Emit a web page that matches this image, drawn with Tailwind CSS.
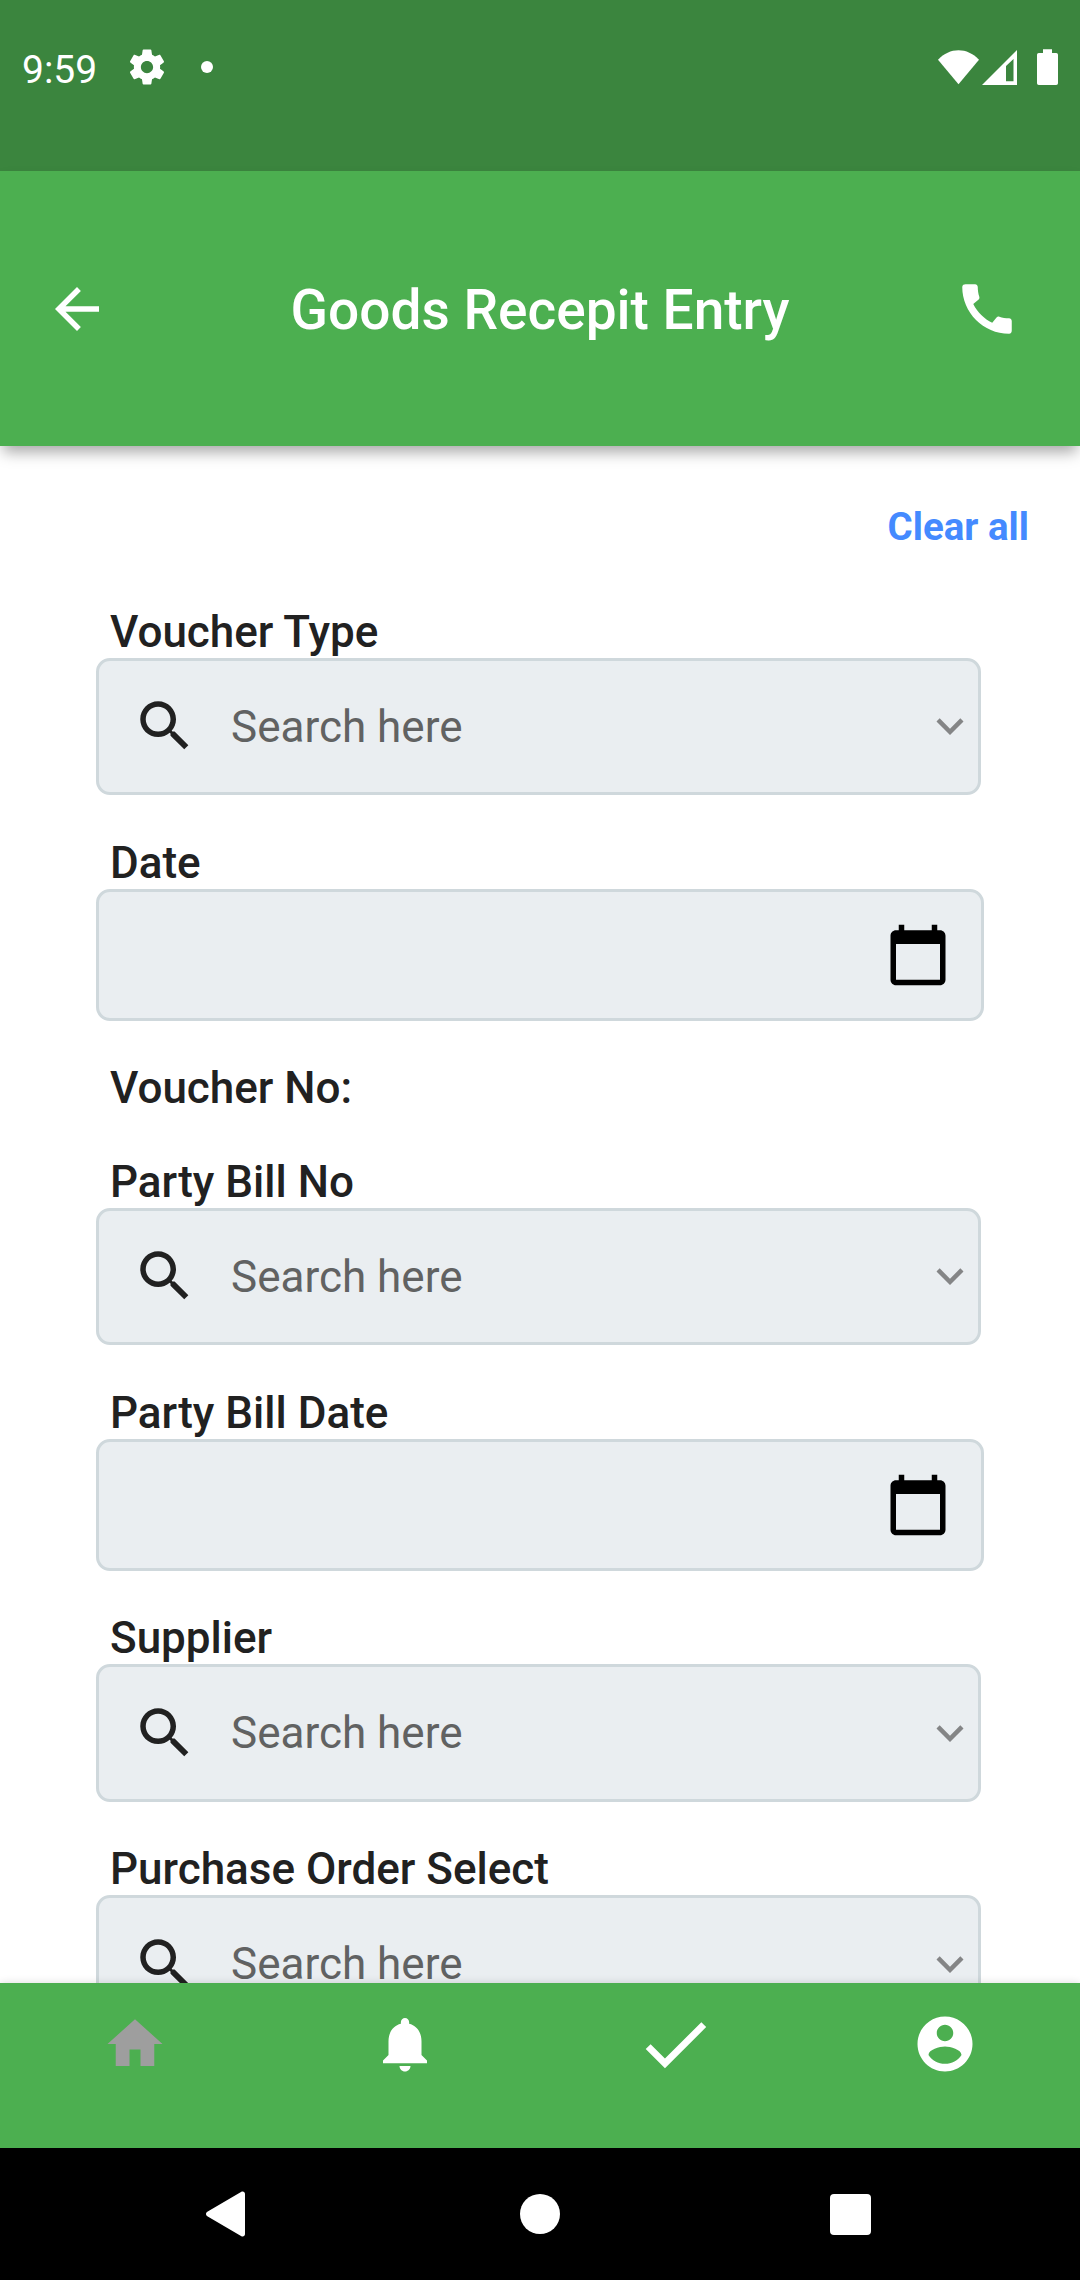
<!DOCTYPE html>
<html lang="en">
<head>
<meta charset="utf-8">
<title>Goods Recepit Entry</title>
<script src="https://cdn.jsdelivr.net/npm/@tailwindcss/browser@4"></script>
</head>
<body class="bg-white">
<svg class="hidden">
  <symbol id="search" viewBox="0 0 24 24"><path d="M15.5 14h-.79l-.28-.27C15.41 12.59 16 11.11 16 9.5 16 5.91 13.09 3 9.5 3S3 5.91 3 9.5 5.91 16 9.5 16c1.61 0 3.09-.59 4.23-1.57l.27.28v.79l5 4.99L20.49 19l-4.99-5zm-6 0C7.01 14 5 11.99 5 9.5S7.01 5 9.5 5 14 7.01 14 9.5 11.99 14 9.5 14z"/></symbol>
  <symbol id="chevron" viewBox="0 0 24 24"><path d="M7.41 8.59 12 13.17l4.59-4.58L18 10l-6 6-6-6z"/></symbol>
  <symbol id="calendar" viewBox="0 0 24 24"><path d="M20 3h-1V1h-2v2H7V1H5v2H4c-1.1 0-2 .9-2 2v16c0 1.1.9 2 2 2h16c1.1 0 2-.9 2-2V5c0-1.1-.9-2-2-2zm0 18H4V8h16v13z"/></symbol>
</svg>
<div class="flex h-[2280px] w-[1080px] flex-col overflow-hidden bg-white font-[Roboto,sans-serif] text-[#212121]">

  <!-- Status bar -->
  <div class="flex h-[171px] shrink-0 items-start justify-between bg-[#3b853e] text-white">
    <div class="flex h-[134px] items-center pl-[22px]">
      <span class="w-[103px] pt-[7px] text-[39px] leading-none">9:59</span>
      <svg class="ml-px size-[42px]" viewBox="0 0 24 24" fill="currentColor"><path d="M19.43 12.98c.04-.32.07-.64.07-.98s-.03-.66-.07-.98l2.11-1.65c.19-.15.24-.42.12-.64l-2-3.46c-.12-.22-.39-.3-.61-.22l-2.49 1c-.52-.4-1.08-.73-1.69-.98l-.38-2.65C14.46 2.18 14.25 2 14 2h-4c-.25 0-.46.18-.49.42l-.38 2.65c-.61.25-1.17.59-1.69.98l-2.49-1c-.23-.09-.49 0-.61.22l-2 3.46c-.13.22-.07.49.12.64l2.11 1.65c-.04.32-.07.65-.07.98s.03.66.07.98l-2.11 1.65c-.19.15-.24.42-.12.64l2 3.46c.12.22.39.3.61.22l2.49-1c.52.4 1.08.73 1.69.98l.38 2.65c.03.24.24.42.49.42h4c.25 0 .46-.18.49-.42l.38-2.65c.61-.25 1.17-.59 1.69-.98l2.49 1c.23.09.49 0 .61-.22l2-3.46c.12-.22.07-.49-.12-.64l-2.11-1.65zM12 15.5c-1.93 0-3.5-1.57-3.5-3.5s1.57-3.5 3.5-3.5 3.5 1.57 3.5 3.5-1.57 3.5-3.5 3.5z"/></svg>
      <span class="ml-[33px] size-3 rounded-full bg-white"></span>
    </div>
    <svg class="mt-[49px] mr-[22px] h-9 w-[120px]" viewBox="0 0 120 36" fill="currentColor">
      <path d="M0 10.7C6 4.5 13 1.3 20.5 1.3S35 4.5 41 10.7L20.5 35.3z"/>
      <path fill-rule="evenodd" d="M44 36 79 1v35zM68 17v15.300h7.500V10z"/>
      <path d="M105 .3h9V4h4.200a1.800 1.800 0 0 1 1.800 1.800v28.400a1.800 1.800 0 0 1-1.800 1.800h-17.400a1.800 1.800 0 0 1-1.800-1.800V5.800A1.800 1.800 0 0 1 100.800 4h4.200z"/>
    </svg>
  </div>

  <!-- App bar -->
  <header class="z-10 flex h-[275px] shrink-0 items-center justify-between bg-[#4caf50] pr-[60px] pl-11 text-white shadow-[0_9px_14px_-3px_rgba(0,0,0,0.35)]">
    <svg class="size-[66px]" viewBox="0 0 24 24" fill="currentColor"><path d="M20 11H7.830l5.590-5.590L12 4l-8 8 8 8 1.410-1.410L7.830 13H20v-2z"/></svg>
    <h1 class="pt-[3px] pl-4 text-[55px] leading-none font-medium">Goods Recepit Entry</h1>
    <svg class="size-[66px]" viewBox="0 0 24 24" fill="currentColor"><path d="M20.010 15.380c-1.230 0-2.420-.2-3.530-.56-.35-.12-.74-.03-1.010.24l-1.570 1.970c-2.830-1.350-5.480-3.900-6.890-6.830l1.950-1.660c.27-.28.35-.67.24-1.020-.37-1.110-.56-2.300-.56-3.530 0-.54-.45-.99-.99-.99H4.190C3.650 3 3 3.240 3 3.990 3 13.280 10.730 21 20.010 21c.71 0 .99-.63.99-1.180v-3.450c0-.54-.45-.99-.99-.99z"/></svg>
  </header>

  <!-- Form -->
  <main class="min-h-0 flex-1 overflow-hidden">
    <div class="flex h-[159.45px] justify-end pt-[58px] pr-[51px]">
      <span class="h-[46px] text-[38.5px] leading-[46px] font-bold text-[#448aff]">Clear all</span>
    </div>
    <div class="flex flex-col gap-[41.25px] pl-24">
      <section>
        <h2 class="h-[52.25px] pl-3.5 text-[44px] leading-[54px] font-medium">Voucher Type</h2>
        <div class="flex h-[137.500px] w-[885px] items-center rounded-[14px] border-3 border-[#cfd8dc] bg-[#eaeef1] pr-px pl-[33px]">
          <svg class="size-[66px]" fill="currentColor"><use href="#search"/></svg>
          <span class="flex-1 pt-px pl-[33px] text-[44px] leading-[52px] text-[#616262]">Search here</span>
          <svg class="size-[54px] text-[#848586]" fill="currentColor"><use href="#chevron"/></svg>
        </div>
      </section>
      <section>
        <h2 class="h-[52.25px] pl-3.5 text-[44px] leading-[54px] font-medium">Date</h2>
        <div class="flex h-[132px] w-[888px] items-center justify-end rounded-[14px] border-3 border-[#cfd8dc] bg-[#eaeef1] pr-[30px]">
          <svg class="size-[66px] text-black" fill="currentColor"><use href="#calendar"/></svg>
        </div>
      </section>
      <h2 class="h-[52.25px] pl-3.5 text-[44px] leading-[52px] font-medium">Voucher No:</h2>
      <section>
        <h2 class="h-[52.25px] pl-3.5 text-[44px] leading-[54px] font-medium">Party Bill No</h2>
        <div class="flex h-[137.500px] w-[885px] items-center rounded-[14px] border-3 border-[#cfd8dc] bg-[#eaeef1] pr-px pl-[33px]">
          <svg class="size-[66px]" fill="currentColor"><use href="#search"/></svg>
          <span class="flex-1 pt-px pl-[33px] text-[44px] leading-[52px] text-[#616262]">Search here</span>
          <svg class="size-[54px] text-[#848586]" fill="currentColor"><use href="#chevron"/></svg>
        </div>
      </section>
      <section>
        <h2 class="h-[52.25px] pl-3.5 text-[44px] leading-[54px] font-medium">Party Bill Date</h2>
        <div class="flex h-[132px] w-[888px] items-center justify-end rounded-[14px] border-3 border-[#cfd8dc] bg-[#eaeef1] pr-[30px]">
          <svg class="size-[66px] text-black" fill="currentColor"><use href="#calendar"/></svg>
        </div>
      </section>
      <section>
        <h2 class="h-[52.25px] pl-3.5 text-[44px] leading-[52px] font-medium">Supplier</h2>
        <div class="flex h-[137.500px] w-[885px] items-center rounded-[14px] border-3 border-[#cfd8dc] bg-[#eaeef1] pr-px pl-[33px]">
          <svg class="size-[66px]" fill="currentColor"><use href="#search"/></svg>
          <span class="flex-1 pl-[33px] text-[44px] leading-[52px] text-[#616262]">Search here</span>
          <svg class="size-[54px] text-[#848586]" fill="currentColor"><use href="#chevron"/></svg>
        </div>
      </section>
      <section>
        <h2 class="h-[52.25px] pl-3.5 text-[44px] leading-[52px] font-medium">Purchase Order Select</h2>
        <div class="flex h-[137.500px] w-[885px] items-center rounded-[14px] border-3 border-[#cfd8dc] bg-[#eaeef1] pr-px pl-[33px]">
          <svg class="size-[66px]" fill="currentColor"><use href="#search"/></svg>
          <span class="flex-1 pl-[33px] text-[44px] leading-[52px] text-[#616262]">Search here</span>
          <svg class="size-[54px] text-[#848586]" fill="currentColor"><use href="#chevron"/></svg>
        </div>
      </section>
    </div>
  </main>

  <!-- Bottom tabs -->
  <nav class="z-10 grid h-[165px] shrink-0 grid-cols-4 items-center justify-items-center bg-[#4caf50] pb-[43px] text-white shadow-[0_0_8px_rgba(0,0,0,0.14)]">
    <svg class="size-[66px] text-[#9e9e9e]" viewBox="0 0 24 24" fill="currentColor"><path d="M10 20v-6h4v6h5v-8h3L12 3 2 12h3v8z"/></svg>
    <svg class="size-[66px]" viewBox="0 0 24 24" fill="currentColor"><path d="M12 22c1.100 0 2-.9 2-2h-4c0 1.100.89 2 2 2zm6-6v-5c0-3.070-1.640-5.640-4.500-6.320V4c0-.83-.67-1.500-1.500-1.500s-1.500.67-1.500 1.500v.68C7.630 5.360 6 7.920 6 11v5l-2 2v1h16v-1l-2-2z"/></svg>
    <svg class="size-[82.5px]" viewBox="0 0 24 24" fill="currentColor"><path d="M9 16.170 4.830 12l-1.420 1.410L9 19 21 7l-1.410-1.410z"/></svg>
    <svg class="size-[66px]" viewBox="0 0 24 24" fill="currentColor"><path d="M12 2C6.480 2 2 6.480 2 12s4.480 10 10 10 10-4.480 10-10S17.520 2 12 2zm0 3c1.660 0 3 1.340 3 3s-1.340 3-3 3-3-1.340-3-3 1.340-3 3-3zm0 14.200c-2.500 0-4.710-1.280-6-3.220.03-1.990 4-3.080 6-3.080 1.990 0 5.970 1.090 6 3.080-1.290 1.940-3.500 3.220-6 3.220z"/></svg>
  </nav>

  <!-- System navigation -->
  <div class="z-10 flex h-[132px] shrink-0 items-center justify-between bg-black pr-[209px] pl-[206px]">
    <svg class="h-[46px] w-[39px]" viewBox="0 0 39 46" fill="white"><path d="M1.300 20.800 35 1.100c2-1.200 4-.2 4 2v39.800c0 2.200-2 3.200-4 2L1.300 25.200c-1.700-1-1.700-3.400 0-4.400z"/></svg>
    <span class="ml-1 size-10 rounded-full bg-white"></span>
    <span class="size-[41px] rounded-[4px] bg-white"></span>
  </div>
</div>
</body>
</html>
